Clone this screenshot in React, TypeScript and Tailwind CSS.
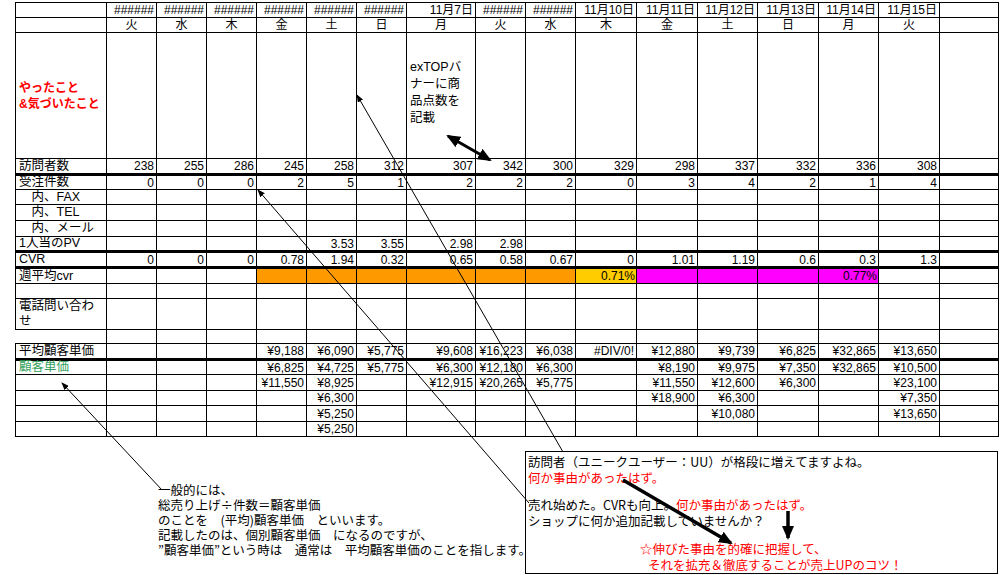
import React from "react";

const widths = [91, 50, 50, 50, 50, 50, 50, 69, 50, 50, 61, 61, 60, 61, 60, 61, 59];
const dates = ["######","######","######","######","######","######","11月7日","######","######","11月10日","11月11日","11月12日","11月13日","11月14日","11月15日",""];
const days = ["火","水","木","金","土","日","月","火","水","木","金","土","日","月","火",""];
const E = "";
type Row = { label: string; h: number; cells: string[]; thick?: boolean; labelCls?: string; noLeft?: boolean };
const rows: Row[] = [
  { label: "訪問者数", h: 16, thick: true, cells: ["238","255","286","245","258","312","307","342","300","329","298","337","332","336","308",E] },
  { label: "受注件数", h: 15, cells: ["0","0","0","2","5","1","2","2","2","0","3","4","2","1","4",E] },
  { label: "\u3000内、FAX", h: 15, cells: Array(16).fill(E) },
  { label: "\u3000内、TEL", h: 16, cells: Array(16).fill(E) },
  { label: "\u3000内、メール", h: 16, cells: Array(16).fill(E) },
  { label: "1人当のPV", h: 15, thick: true, cells: [E,E,E,E,"3.53","3.55","2.98","2.98",E,E,E,E,E,E,E,E] },
  { label: "CVR", h: 16, thick: true, cells: ["0","0","0","0.78","1.94","0.32","0.65","0.58","0.67","0","1.01","1.19","0.6","0.3","1.3",E] },
];
const rows2: Row[] = [
  { label: "平均顧客単価", h: 16, thick: true, cells: [E,E,E,"¥9,188","¥6,090","¥5,775","¥9,608","¥16,223","¥6,038","#DIV/0!","¥12,880","¥9,739","¥6,825","¥32,865","¥13,650",E] },
  { label: "顧客単価", h: 15, labelCls: "text-[#33a05a]", cells: [E,E,E,"¥6,825","¥4,725","¥5,775","¥6,300","¥12,180","¥6,300",E,"¥8,190","¥9,975","¥7,350","¥32,865","¥10,500",E] },
  { label: "", h: 16, cells: [E,E,E,"¥11,550","¥8,925",E,"¥12,915","¥20,265","¥5,775",E,"¥11,550","¥12,600","¥6,300",E,"¥23,100",E] },
  { label: "", h: 15, cells: [E,E,E,E,"¥6,300",E,E,E,E,E,"¥18,900","¥6,300",E,E,"¥7,350",E] },
  { label: "", h: 16, cells: [E,E,E,E,"¥5,250",E,E,E,E,E,E,"¥10,080",E,E,"¥13,650",E] },
  { label: "", h: 15, cells: [E,E,E,E,"¥5,250",E,E,E,E,E,E,E,E,E,E,E] },
];
const wk = [E,E,E,"o","o","o","o","o","o","y","m","m","m","m",E,E];
const wkBg: Record<string,string> = { o: "bg-[#ff9900]", y: "bg-[#ffcc00]", m: "bg-[#ff00ff]", "": "" };

const cellB = "border border-black";

function DataRow({ r }: { r: Row }) {
  return (
    <tr style={{ height: r.h }}>
      <td className={`${cellB} px-[3px] whitespace-nowrap text-[12.5px] ${r.labelCls ?? ""} ${r.thick ? "border-b-[3px]" : ""}`}>{r.label}</td>
      {r.cells.map((c, i) => (
        <td key={i} className={`${cellB} text-right pr-[2px] whitespace-nowrap ${r.thick ? "border-b-[3px]" : ""}`}>{c}</td>
      ))}
    </tr>
  );
}

export default function App() {
  return (
    <div className="relative w-[1000px] h-[575px] bg-white overflow-hidden text-black" style={{ fontFamily: '"Liberation Sans","Noto Sans CJK JP",sans-serif' }}>
      <div className="pl-[15px] pt-[2px]">
        <table className="table-fixed border-collapse text-[12px] leading-none" style={{ width: 983 }}>
          <colgroup>
            {widths.map((w, i) => <col key={i} style={{ width: w }} />)}
          </colgroup>
          <tbody>
            <tr style={{ height: 15 }}>
              <td className={cellB}></td>
              {dates.map((d, i) => <td key={i} className={`${cellB} text-right pr-[2px] whitespace-nowrap`}>{d}</td>)}
            </tr>
            <tr style={{ height: 15 }}>
              <td className={cellB}></td>
              {days.map((d, i) => <td key={i} className={`${cellB} text-center`}>{d}</td>)}
            </tr>
            <tr style={{ height: 126 }}>
              <td className={`${cellB} px-[3px] text-[#ff0000] font-bold text-[12px] leading-[16px] align-middle`}>やったこと<br />&amp;気づいたこと</td>
              {days.map((_, i) => (
                <td key={i} className={`${cellB} align-middle`}>
                  {i === 6 && (
                    <div className="pl-[3px] pb-[6px] text-[12.5px] leading-[17px] whitespace-nowrap">
                      exTOPバ<br />ナーに商<br />品点数を<br />記載
                    </div>
                  )}
                </td>
              ))}
            </tr>
            {rows.map((r, i) => <DataRow key={i} r={r} />)}
            <tr style={{ height: 16 }}>
              <td className={`${cellB} px-[3px] text-[12.5px]`}>週平均cvr</td>
              {wk.map((w, i) => (
                <td key={i} className={`${cellB} ${wkBg[w]} text-right pr-[1px]`}>{i === 9 ? "0.71%" : i === 13 ? "0.77%" : ""}</td>
              ))}
            </tr>
            <tr style={{ height: 15 }}>
              <td className={cellB}></td>
              {days.map((_, i) => <td key={i} className={cellB}></td>)}
            </tr>
            <tr style={{ height: 31 }}>
              <td className={`${cellB} px-[3px] text-[12.5px] leading-[15px]`}>電話問い合わせ</td>
              {days.map((_, i) => <td key={i} className={cellB}></td>)}
            </tr>
            <tr style={{ height: 14 }}>
              <td className="border-t border-black"></td>
              {days.map((_, i) => <td key={i} className={cellB}></td>)}
            </tr>
            {rows2.map((r, i) => <DataRow key={i} r={r} />)}
          </tbody>
        </table>
      </div>

      <div className="absolute left-[158px] top-[482px] text-[12.5px] leading-[15px] whitespace-pre" style={{ fontFamily: '"Noto Sans CJK JP",sans-serif' }}>
        {"一般的には、\n総売り上げ÷件数＝顧客単価\nのことを　(平均)顧客単価　といいます。\n記載したのは、個別顧客単価　になるのですが、\n”顧客単価”という時は　通常は　平均顧客単価のことを指します。"}
      </div>

      <div className="absolute left-[525px] top-[451px] w-[473px] h-[123px] border border-black bg-white pl-[2px] pt-[2px] text-[12.5px] leading-[16px]" style={{ fontFamily: '"Noto Sans CJK JP",sans-serif' }}>
        <div>訪問者（ユニークユーザー：UU）が格段に増えてますよね。</div>
        <div className="text-[#ff0000]">何か事由があったはず。</div>
        <div className="h-[11px]"></div>
        <div>売れ始めた。CVRも向上。<span className="text-[#ff0000]">何か事由があったはず。</span></div>
        <div>ショップに何か追加記載していませんか？</div>
        <div className="h-[12px]"></div>
        <div className="text-[#ff0000] pl-[112px]">☆伸びた事由を的確に把握して、</div>
        <div className="text-[#ff0000] pl-[120px]">それを拡充＆徹底することが売上UPのコツ！</div>
      </div>

      <svg className="absolute left-0 top-0 pointer-events-none" width="1000" height="575">
        <defs>
          <marker id="a" markerWidth="8" markerHeight="6" refX="7" refY="3" orient="auto" markerUnits="userSpaceOnUse">
            <path d="M0,0 L8,3 L0,6 Z" fill="black" />
          </marker>
          <marker id="b" markerWidth="14" markerHeight="12" refX="12" refY="6" orient="auto" markerUnits="userSpaceOnUse">
            <path d="M0,0 L14,6 L0,12 Z" fill="black" />
          </marker>
          <marker id="bs" markerWidth="14" markerHeight="12" refX="2" refY="6" orient="auto" markerUnits="userSpaceOnUse">
            <path d="M14,0 L0,6 L14,12 Z" fill="black" />
          </marker>
        </defs>
        <line x1="563" y1="452" x2="357" y2="95" stroke="black" strokeWidth="1" markerEnd="url(#a)" />
        <line x1="529" y1="503" x2="258" y2="190" stroke="black" strokeWidth="1" markerEnd="url(#a)" />
        <line x1="162" y1="490" x2="62" y2="383" stroke="black" strokeWidth="1" markerEnd="url(#a)" />
        <line x1="448" y1="136" x2="490" y2="160" stroke="black" strokeWidth="3" markerStart="url(#bs)" markerEnd="url(#b)" />
        <line x1="623" y1="480" x2="731" y2="543" stroke="black" strokeWidth="3.5" markerEnd="url(#b)" />
        <line x1="788" y1="511" x2="788" y2="538" stroke="black" strokeWidth="3.5" markerEnd="url(#b)" />
      </svg>
    </div>
  );
}
